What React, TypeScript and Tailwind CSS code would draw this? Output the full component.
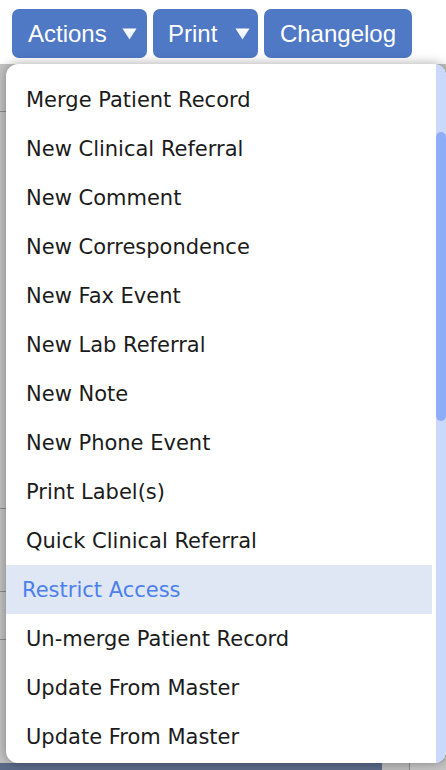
const items = [
  "Merge Patient Record",
  "New Clinical Referral",
  "New Comment",
  "New Correspondence",
  "New Fax Event",
  "New Lab Referral",
  "New Note",
  "New Phone Event",
  "Print Label(s)",
  "Quick Clinical Referral",
  "Restrict Access",
  "Un-merge Patient Record",
  "Update From Master",
  "Update From Master",
];

const Caret = () => (
  <svg width="15" height="12" viewBox="0 0 15 12" className="shrink-0">
    <defs>
      <linearGradient id="caretFill" x1="0" y1="0" x2="0" y2="1">
        <stop offset="0" stopColor="#ffffff" />
        <stop offset="1" stopColor="#e4ebf8" />
      </linearGradient>
    </defs>
    <path d="M0.5 0.5 H14.5 L7.5 11.5 Z" fill="url(#caretFill)" />
  </svg>
);

const ToolbarButton = ({ label, dropdown, className }: { label: string; dropdown?: boolean; className: string }) => (
  <button
    className={`h-[49px] flex items-center bg-[#4f78c5] text-white rounded-[7px] text-[24px] leading-none ${className}`}
    style={{ fontFamily: '"Liberation Sans", Arial, sans-serif' }}
  >
    <span>{label}</span>
    {dropdown && <Caret />}
  </button>
);

export default function App() {
  return (
    <div className="relative w-[446px] h-[770px] overflow-hidden bg-white flex flex-col">
      <div className="flex gap-[6px] pl-[12px] pt-[9px] h-[64px] bg-white">
        <ToolbarButton label="Actions" dropdown className="w-[135px] pl-[16px] pr-[10px] justify-between" />
        <ToolbarButton label="Print" dropdown className="w-[105px] pl-[15px] pr-[8px] justify-between" />
        <ToolbarButton label="Changelog" className="w-[148px] justify-center" />
      </div>

      <div className="flex-1 flex flex-col bg-[#c3c3c3]">
        <div className="flex-1 flex flex-col">
          <div className="h-[48px] border-b border-[#8a8a8a]" />
          <div className="h-[397px] border-b border-[#8a8a8a]" />
          <div className="h-[83px] border-b border-[#8a8a8a]" />
          <div className="h-[48px] border-b border-[#8a8a8a]" />
        </div>
        <div className="h-[7px] flex">
          <div className="w-[382px] bg-[#5b6a89]" />
          <div className="w-[28px] bg-[#bdbdbd] border-r border-[#8d8d8d]" />
          <div className="flex-1 bg-[#c6c6c6]" />
        </div>
      </div>

      <div
        className="absolute left-[6px] top-[64px] w-[440px] h-[699px] bg-white rounded-[12px] overflow-hidden flex shadow-[0_0_12px_rgba(0,0,0,0.35)]"
        style={{ fontFamily: '"DejaVu Sans", Tahoma, Verdana, sans-serif' }}
      >
        <ul className="w-[426px] pt-[11px] flex flex-col">
          {items.map((item, i) =>
            item === "Restrict Access" ? (
              <li
                key={i}
                className="h-[49px] flex items-center pl-[16px] pt-[2px] bg-[#dfe6f4] text-[#4b80ee] text-[21px]"
              >
                {item}
              </li>
            ) : (
              <li key={i} className="h-[49px] flex items-center pl-[20px] pt-[2px] text-[#1b1b1b] text-[21px]">
                {item}
              </li>
            )
          )}
        </ul>
        <div className="w-[4px]" />
        <div className="w-[10px] bg-[#cad8fb] flex flex-col">
          <div className="mt-[68px] h-[289px] bg-[#8dadf7] rounded-full" />
        </div>
      </div>
    </div>
  );
}
